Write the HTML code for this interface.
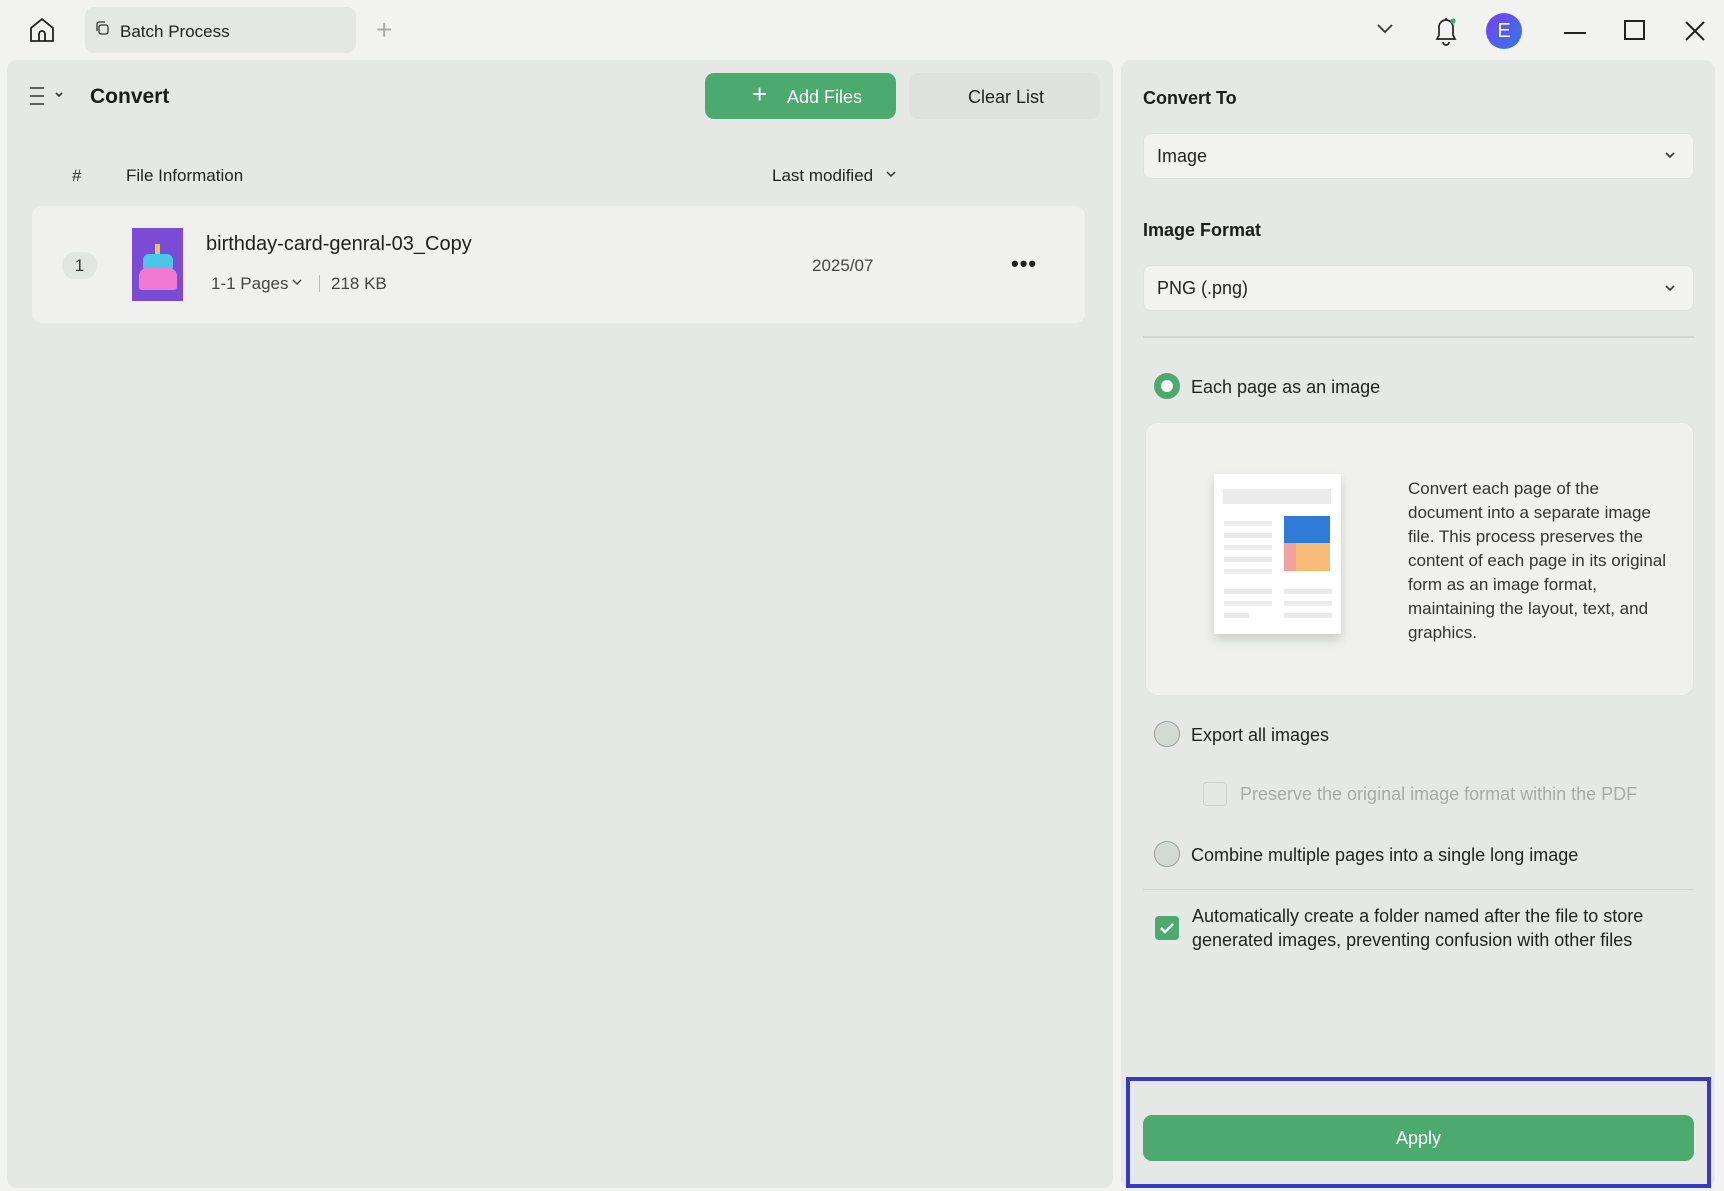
<!DOCTYPE html>
<html><head><meta charset="utf-8"><style>
*{box-sizing:border-box;margin:0;padding:0}
body{width:1724px;height:1191px;background:#f2f3f1;font-family:"Liberation Sans",sans-serif;color:#222;position:relative;overflow:hidden}
.a{position:absolute}
.panel{background:#e6e8e5;border-radius:10px}
.t{position:absolute;white-space:nowrap}
.dd{position:absolute;left:1143px;width:551px;height:46px;background:#f2f3f1;border-radius:8px;border:1px solid #e0e2df}
.dd span{position:absolute;left:13px;top:12px;font-size:18px;color:#222}
.radio{position:absolute;width:26px;height:26px;border-radius:50%}
</style></head><body>
<svg class="a" style="left:27px;top:15px" width="30" height="30" viewBox="0 0 30 30" fill="none" stroke="#222" stroke-width="1.8"><path d="M4 13 L15 4 L26 13 V26 H4 Z"/><path d="M12 26 V19 a3 3 0 0 1 6 0 V26"/></svg>
<div class="a" style="left:85px;top:7px;width:271px;height:46px;background:#e5e7e4;border-radius:9px"></div>
<svg class="a" style="left:94px;top:20px" width="16" height="16" viewBox="0 0 16 16" fill="none" stroke="#333" stroke-width="1.3"><rect x="5" y="5" width="9" height="9" rx="2"/><path d="M3 11 V4 a2 2 0 0 1 2-2 H11"/></svg>
<div class="t" style="left:120px;top:22px;font-size:17px;color:#222">Batch Process</div>
<div class="t" style="left:376px;top:14px;font-size:28px;color:#aaa;font-weight:300">+</div>
<svg class="a" style="left:1375px;top:22px" width="20" height="14" viewBox="0 0 20 14" fill="none" stroke="#333" stroke-width="1.8"><path d="M3 3 L10 10 L17 3"/></svg>
<svg class="a" style="left:1432px;top:14px" width="28" height="34" viewBox="0 0 28 34" fill="none" stroke="#222" stroke-width="1.7"><path d="M5 25 H23 L21 21 V13 a7 7 0 0 0-14 0 V21 Z"/><path d="M11 28 a3 3 0 0 0 6 0"/><path d="M14 4 V6"/><circle cx="21" cy="7" r="2.6" fill="#4caa6e" stroke="none"/></svg>
<div class="a" style="left:1486px;top:13px;width:36px;height:36px;border-radius:50%;background:linear-gradient(135deg,#7a3ff0,#2f7ae6);color:#fff;font-size:20px;text-align:center;line-height:36px">E</div>
<div class="a" style="left:1564px;top:32px;width:22px;height:2px;background:#222"></div>
<div class="a" style="left:1624px;top:20px;width:21px;height:20px;border:2px solid #222"></div>
<svg class="a" style="left:1684px;top:20px" width="22" height="22" viewBox="0 0 22 22" stroke="#222" stroke-width="2"><path d="M2 2 L20 20 M20 2 L2 20"/></svg>

<div class="a panel" style="left:7px;top:60px;width:1106px;height:1128px"></div>
<svg class="a" style="left:29px;top:86px" width="34" height="20" viewBox="0 0 34 20" fill="none" stroke="#333" stroke-width="1.6"><path d="M1 2 H15 M1 10 H15 M1 18 H15"/><path d="M27 7 L30 10 L33 7"/></svg>
<div class="t" style="left:90px;top:85px;font-size:21px;font-weight:bold;color:#1c1c1c">Convert</div>
<div class="a" style="left:705px;top:73px;width:191px;height:46px;background:#4caa6e;border-radius:9px"></div>
<div class="t" style="left:752px;top:79px;font-size:26px;color:#fff;font-weight:300">+</div>
<div class="t" style="left:787px;top:87px;font-size:18px;color:#fff">Add Files</div>
<div class="a" style="left:909px;top:73px;width:191px;height:46px;background:#dfe1de;border-radius:9px"></div>
<div class="t" style="left:968px;top:87px;font-size:18px;color:#222">Clear List</div>
<div class="t" style="left:72px;top:166px;font-size:17px;color:#333">#</div>
<div class="t" style="left:126px;top:166px;font-size:17px;color:#222">File Information</div>
<div class="t" style="left:772px;top:166px;font-size:17px;color:#222">Last modified</div>
<svg class="a" style="left:885px;top:170px" width="12" height="8" viewBox="0 0 12 8" fill="none" stroke="#333" stroke-width="1.5"><path d="M2 2 L6 6 L10 2"/></svg>
<div class="a" style="left:32px;top:206px;width:1053px;height:117px;background:#f0f1ef;border-radius:10px"></div>
<div class="a" style="left:62px;top:252px;width:35px;height:27px;background:#e3e5e2;border-radius:13px;text-align:center;line-height:27px;font-size:17px;color:#333">1</div>
<div class="a" style="left:132px;top:228px;width:51px;height:73px;background:#7b4bd6"></div>
<div class="a" style="left:143px;top:254px;width:30px;height:16px;background:#4cc6e8;border-radius:6px 6px 3px 3px"></div>
<div class="a" style="left:139px;top:268px;width:38px;height:22px;background:#f07ad0;border-radius:8px 8px 3px 3px"></div>
<div class="a" style="left:155px;top:244px;width:5px;height:10px;background:#f4c05a"></div>
<div class="t" style="left:206px;top:233px;font-size:20px;color:#1f1f1f">birthday-card-genral-03_Copy</div>
<div class="t" style="left:211px;top:274px;font-size:17px;color:#444">1-1 Pages</div>
<svg class="a" style="left:291px;top:278px" width="12" height="8" viewBox="0 0 12 8" fill="none" stroke="#444" stroke-width="1.4"><path d="M2 2 L6 6 L10 2"/></svg>
<div class="a" style="left:319px;top:275px;width:1px;height:17px;background:#bbb"></div>
<div class="t" style="left:331px;top:274px;font-size:17px;color:#444">218 KB</div>
<div class="t" style="left:812px;top:256px;font-size:17px;color:#444">2025/07</div>
<div class="t" style="left:1011px;top:251px;font-size:22px;color:#222;font-weight:bold;letter-spacing:1px">•••</div>

<div class="a panel" style="left:1121px;top:60px;width:594px;height:1128px"></div>
<div class="t" style="left:1143px;top:88px;font-size:18px;font-weight:bold;color:#1c1c1c">Convert To</div>
<div class="dd" style="top:133px"><span>Image</span></div>
<svg class="a" style="left:1664px;top:151px" width="12" height="8" viewBox="0 0 12 8" fill="none" stroke="#333" stroke-width="1.6"><path d="M2 2 L6 6 L10 2"/></svg>
<div class="t" style="left:1143px;top:220px;font-size:18px;font-weight:bold;color:#1c1c1c">Image Format</div>
<div class="dd" style="top:265px"><span>PNG (.png)</span></div>
<svg class="a" style="left:1664px;top:284px" width="12" height="8" viewBox="0 0 12 8" fill="none" stroke="#333" stroke-width="1.6"><path d="M2 2 L6 6 L10 2"/></svg>
<div class="a" style="left:1143px;top:336px;width:551px;height:2px;background:#d3d6d2"></div>
<div class="radio" style="left:1154px;top:373px;background:#fff;border:7px solid #4caa6e"></div>
<div class="t" style="left:1191px;top:377px;font-size:18px;color:#222">Each page as an image</div>
<div class="a" style="left:1145px;top:422px;width:549px;height:274px;background:#f0f1ef;border-radius:12px;border:1px solid #e2e4e1"></div>
<div class="a" style="left:1214px;top:474px;width:127px;height:160px;background:#fff;box-shadow:0 6px 10px rgba(0,0,0,.15)"></div>
<div class="a" style="left:1223px;top:489px;width:108px;height:15px;background:#ebebeb"></div>
<div class="a" style="left:1284px;top:516px;width:46px;height:55px;background:#f7bd78"></div>
<div class="a" style="left:1284px;top:516px;width:46px;height:27px;background:#2f7bd6"></div>
<div class="a" style="left:1284px;top:543px;width:12px;height:28px;background:#f2a0a0"></div>
<svg class="a" style="left:1224px;top:521px" width="110" height="100"><g fill="#ebebeb"><rect x="0" y="0" width="48" height="5"/><rect x="0" y="12" width="48" height="5"/><rect x="0" y="24" width="48" height="5"/><rect x="0" y="36" width="48" height="5"/><rect x="0" y="48" width="48" height="5"/><rect x="0" y="68" width="48" height="5"/><rect x="0" y="80" width="48" height="5"/><rect x="0" y="92" width="25" height="5"/><rect x="60" y="68" width="48" height="5"/><rect x="60" y="80" width="48" height="5"/><rect x="60" y="92" width="48" height="5"/></g></svg>
<div class="a" style="left:1408px;top:477px;font-size:17px;line-height:24px;color:#333;width:268px">Convert each page of the document into a separate image file. This process preserves the content of each page in its original form as an image format, maintaining the layout, text, and graphics.</div>
<div class="radio" style="left:1154px;top:721px;background:#d3d9d3;border:1.5px solid #9aa39b"></div>
<div class="t" style="left:1191px;top:725px;font-size:18px;color:#222">Export all images</div>
<div class="a" style="left:1203px;top:782px;width:24px;height:24px;border:1.5px solid #cfd2ce;border-radius:4px"></div>
<div class="t" style="left:1240px;top:784px;font-size:18px;color:#aaa">Preserve the original image format within the PDF</div>
<div class="radio" style="left:1154px;top:841px;background:#d3d9d3;border:1.5px solid #9aa39b"></div>
<div class="t" style="left:1191px;top:845px;font-size:18px;color:#222">Combine multiple pages into a single long image</div>
<div class="a" style="left:1143px;top:889px;width:551px;height:1px;background:#d3d6d2"></div>
<div class="a" style="left:1155px;top:916px;width:24px;height:24px;background:#4caa6e;border-radius:4px"></div>
<svg class="a" style="left:1155px;top:916px" width="24" height="24" fill="none" stroke="#fff" stroke-width="2.5"><path d="M6 12 L10 16 L18 8"/></svg>
<div class="a" style="left:1192px;top:904px;font-size:18px;line-height:24px;color:#222;width:500px">Automatically create a folder named after the file to store generated images, preventing confusion with other files</div>
<div class="a" style="left:1126px;top:1077px;width:585px;height:111px;border:4px solid #3538c9"></div>
<div class="a" style="left:1143px;top:1115px;width:551px;height:46px;background:#4caa6e;border-radius:9px;color:#fff;font-size:18px;text-align:center;line-height:46px">Apply</div>
</body></html>
